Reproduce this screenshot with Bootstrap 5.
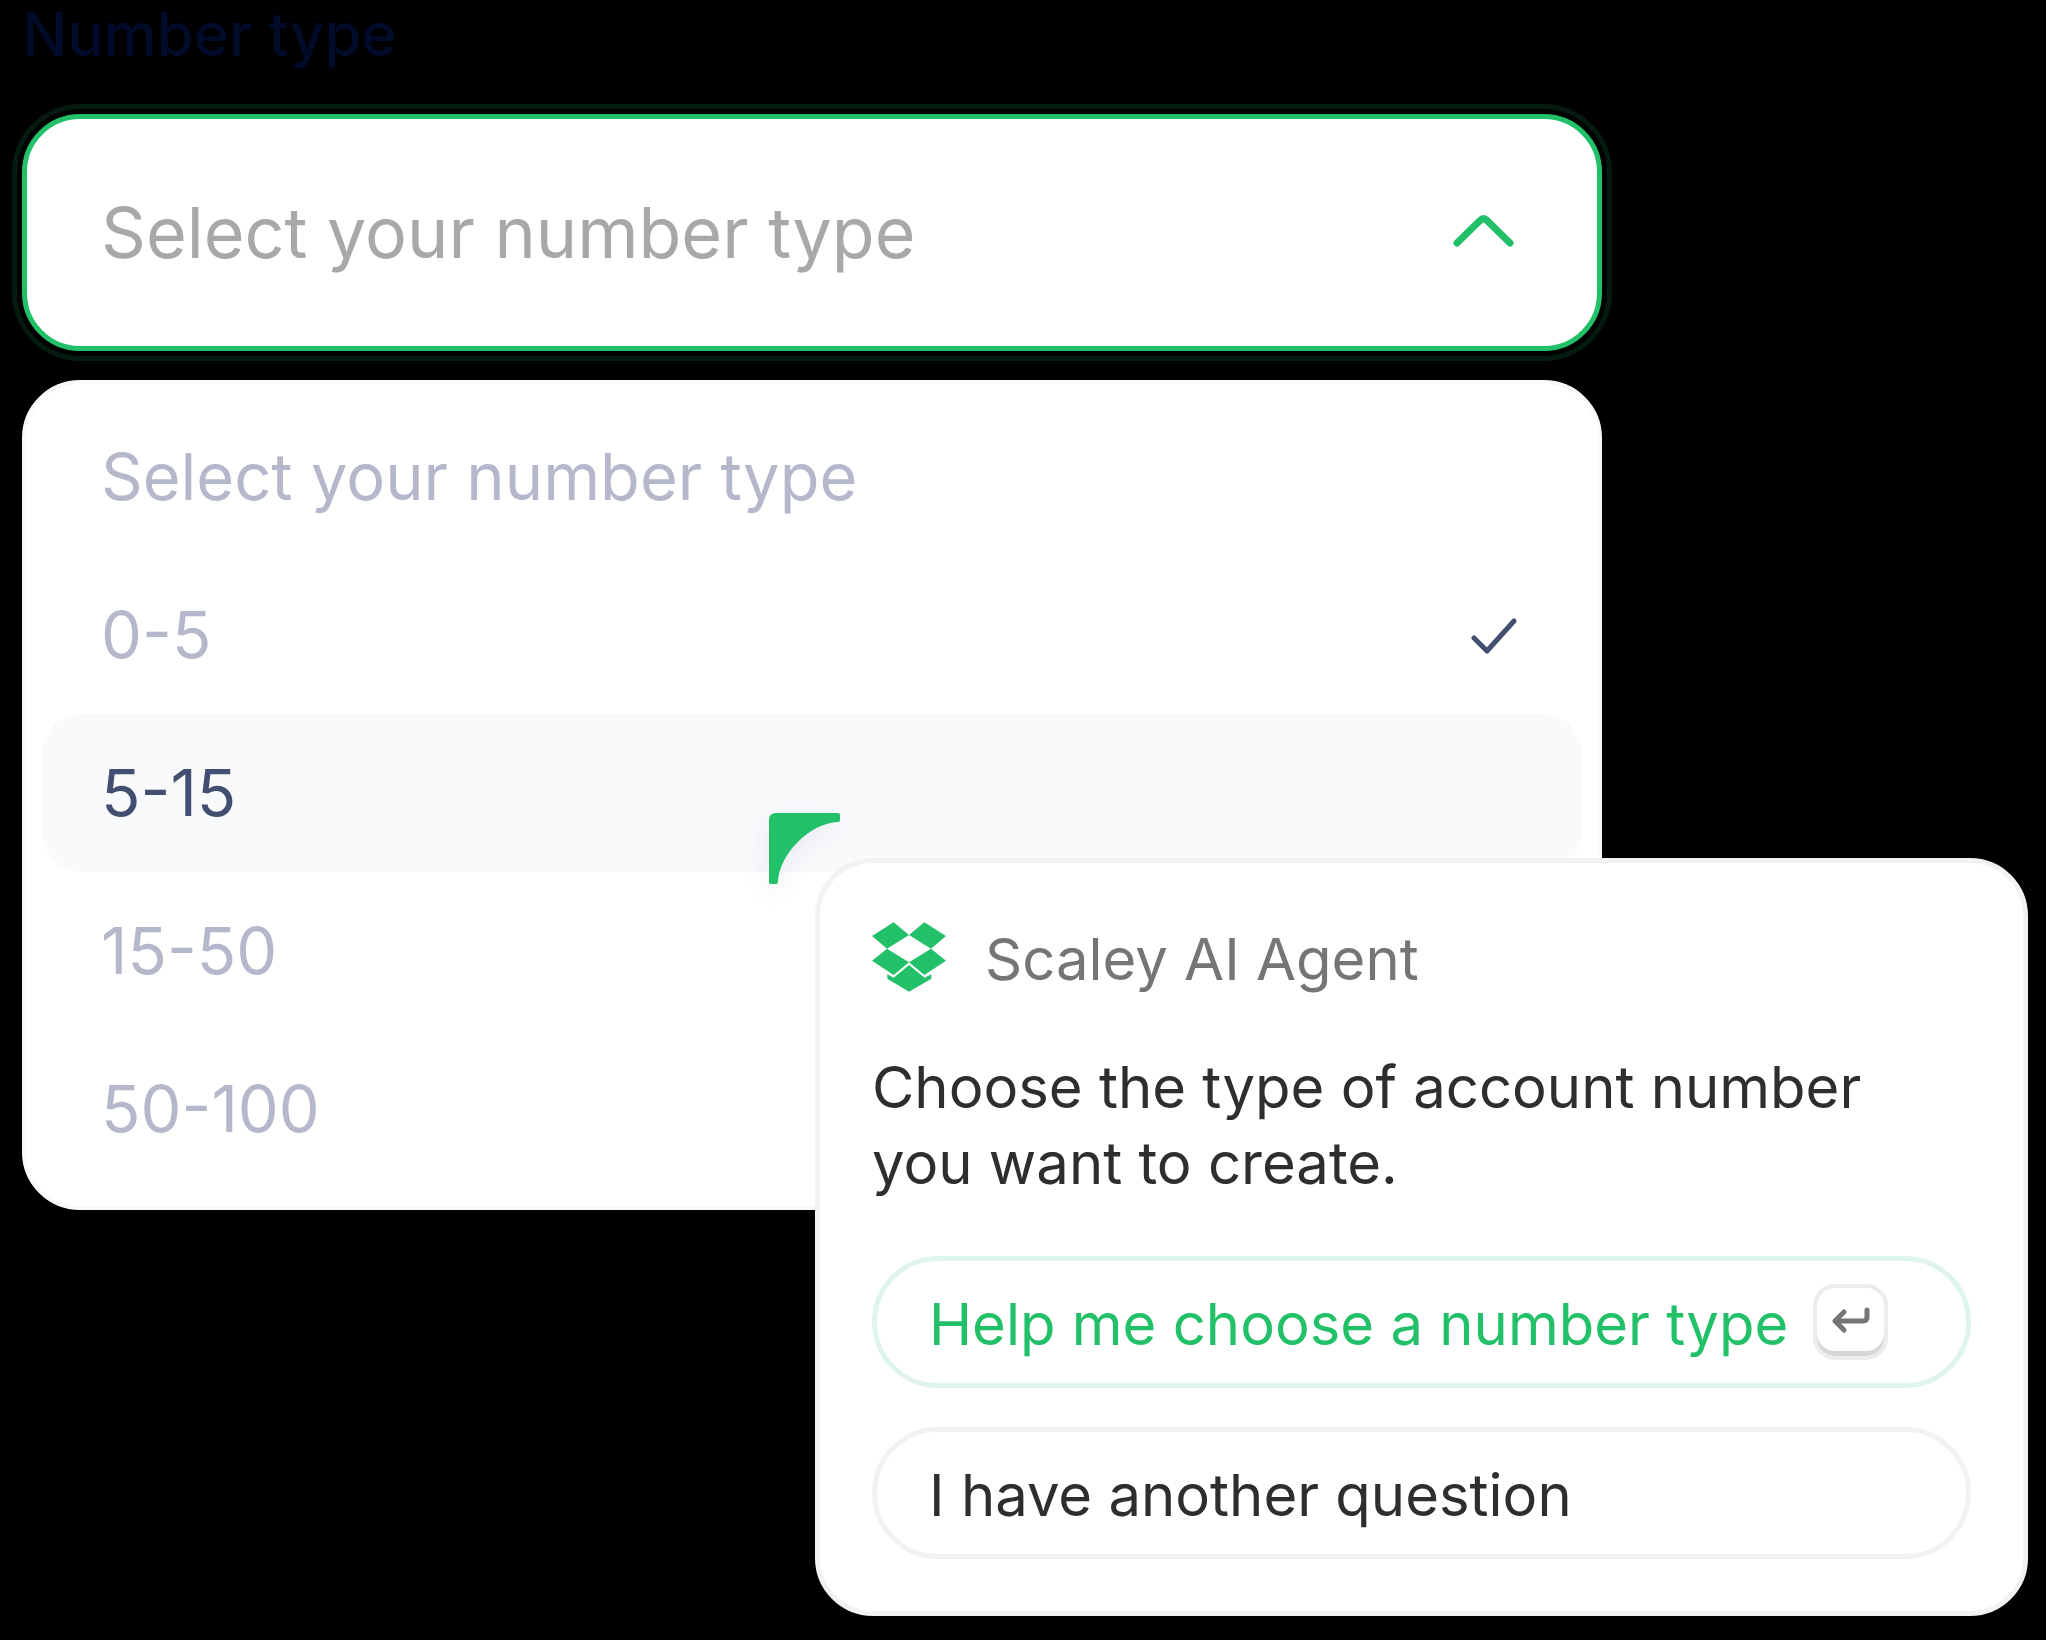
<!DOCTYPE html>
<html lang="en">
<head>
<meta charset="utf-8">
<meta name="viewport" content="width=device-width, initial-scale=1">
<title>Number type</title>
<link href="https://cdn.jsdelivr.net/npm/bootstrap@5.3.0/dist/css/bootstrap.min.css" rel="stylesheet">
<style>
  :root { --brand: #22c069; --edge: #f2f2f2; --ink: #2e2e2e; --navy: #434f70; --faint: #b4b8ca; }
  body { background: #000; font-family: Inter, "Liberation Sans", sans-serif; }
  .stage { padding: 0 22px; }
  .picker { max-width: 1580px; }
  .picker-label { font-size: 60px; line-height: 68px; font-weight: 500; color: #000b2a; margin-bottom: 46px; }
  .picker-field { margin-bottom: 29px; }
  .picker-field .form-select {
    appearance: none; background: #fff; color: #a8a8a8; border: 5px solid var(--brand); border-radius: 58px;
    font-size: 70px; line-height: 83px; padding: 72px 160px 72px 74px;
    box-shadow: 0 0 0 5px #000, 0 0 0 10px #061b10;
  }
  .picker-field .chevron { right: 86px; top: 98px; pointer-events: none; }
  .options { background: #fff; border: 4px solid #f9f9f9; border-radius: 58px; padding: 14px 16px 18px; }
  .options .list-group-item {
    border: 0; border-radius: 40px; padding: 40px 65px 40px 59px; background: transparent;
    font-size: 65px; line-height: 78px; color: var(--faint);
  }
  .options .list-group-item.is-hover { background: #f8fafc; color: var(--navy); }
  .pointer { left: 769px; top: 813px; filter: drop-shadow(0 6px 12px rgba(20, 30, 50, .08)); }
  .agent {
    right: 18px; top: 858px; width: 1213px; max-width: calc(100% - 36px);
    border: 5px solid var(--edge); border-radius: 58px; background: #fff; color: var(--ink);
    padding: 59px 52px 52px; font-size: 58px; line-height: 76px;
  }
  .agent-head { gap: 39px; height: 70px; margin-bottom: 57px; color: #757575; }
  .agent-head span { padding-top: 4px; }
  .agent-text { margin-bottom: 55px; padding-right: 40px; }
  .agent-actions { gap: 39px; }
  .reply {
    border: 5px solid var(--edge); border-radius: 66px; padding: 23px 52px 19px; gap: 25px;
    font-size: 58px; line-height: 80px; color: var(--ink);
  }
  .reply.is-main { border-color: #dff4ea; color: var(--brand); }
  .keycap { width: 75px; height: 76px; border-radius: 22px; border: 4px solid #ececec; background: #fff; box-shadow: inset 0 -5px 0 #d6d6d6; }
</style>
</head>
<body>
<main class="stage position-relative min-vh-100">
  <div class="picker">
    <label class="picker-label d-block" for="numberType">Number type</label>
    <div class="picker-field position-relative">
      <select class="form-select" id="numberType">
        <option selected>Select your number type</option>
        <option>0-5</option>
        <option>5-15</option>
        <option>15-50</option>
        <option>50-100</option>
      </select>
      <svg class="chevron position-absolute" width="64" height="40" viewBox="0 0 64 40" fill="none" stroke="#22c069" stroke-width="7" stroke-linecap="round" stroke-linejoin="round" aria-hidden="true"><path d="M5 31L28 8.500Q31.500 5 35 8.500L58 31"/></svg>
    </div>
    <div class="options list-group" role="listbox" aria-label="Number type">
      <button type="button" role="option" class="list-group-item list-group-item-action">Select your number type</button>
      <button type="button" role="option" aria-selected="true" class="list-group-item list-group-item-action d-flex align-items-center justify-content-between">0-5
        <svg width="46" height="38" viewBox="0 0 46 38" fill="none" stroke="#434f70" stroke-width="5" stroke-linecap="round" stroke-linejoin="round" aria-hidden="true"><path d="M3 22L16 35L43 5"/></svg>
      </button>
      <button type="button" role="option" class="list-group-item list-group-item-action is-hover">5-15</button>
      <button type="button" role="option" class="list-group-item list-group-item-action">15-50</button>
      <button type="button" role="option" class="list-group-item list-group-item-action">50-100</button>
    </div>
  </div>

  <svg class="pointer position-absolute" width="72" height="72" viewBox="0 0 72 72" fill="#22c069" aria-hidden="true"><path d="M7 0H69Q71 0 71 2V7Q71 9 69 9C41 10 10 41 9 69Q9 71 7 71H2Q0 71 0 69V7Q0 0 7 0Z"/></svg>

  <section class="agent position-absolute" aria-label="Scaley AI Agent">
    <header class="agent-head d-flex align-items-center">
      <svg width="74" height="70" viewBox="395 428 222 208" fill="#22c069" aria-hidden="true"><path d="M460 428L506 466L440 507L395 469ZM552 428L617 469L572 507L506 466ZM440 507L506 548L460 586L395 543ZM572 507L617 543L552 586L506 548ZM506 556L553 594L573 584V597L506 636L441 597V584L460 594Z"/></svg>
      <span>Scaley AI Agent</span>
    </header>
    <p class="agent-text">Choose the type of account number you want to create.</p>
    <div class="agent-actions d-flex flex-column">
      <button type="button" class="btn reply is-main d-flex align-items-start text-start">
        <span>Help me choose a number type</span>
        <kbd class="keycap d-flex align-items-center justify-content-center p-0">
          <svg width="40" height="32" viewBox="0 0 40 32" fill="none" stroke="#757575" stroke-width="5" stroke-linecap="round" stroke-linejoin="round" aria-hidden="true"><path d="M36 4V11Q36 15 32 15H4M13 6L4 15L13 24"/></svg>
        </kbd>
      </button>
      <button type="button" class="btn reply text-start">I have another question</button>
    </div>
  </section>
</main>
<script src="https://cdn.jsdelivr.net/npm/bootstrap@5.3.0/dist/js/bootstrap.bundle.min.js"></script>
</body>
</html>
